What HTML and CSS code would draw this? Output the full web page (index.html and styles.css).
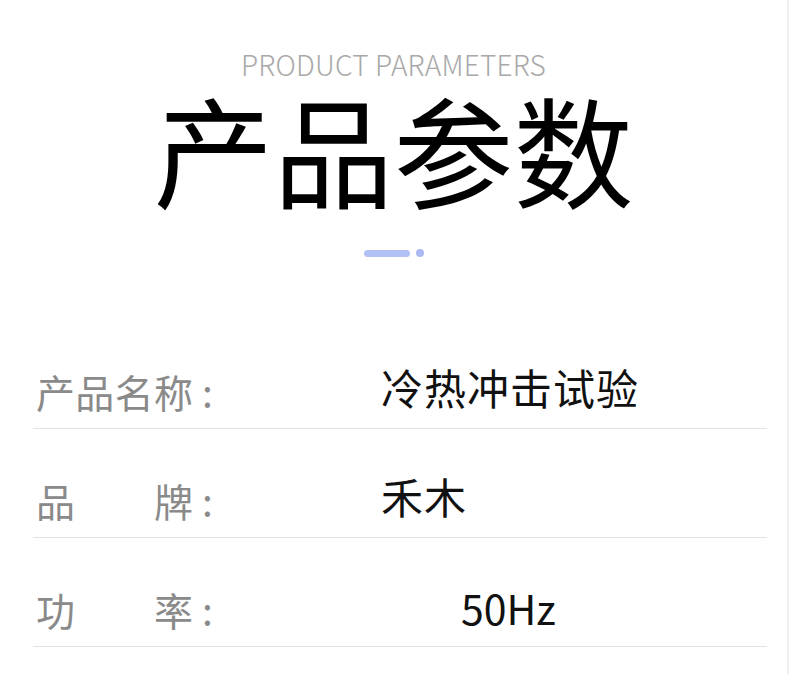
FILE: index.html
```html
<!DOCTYPE html>
<html lang="zh">
<head>
    <meta charset="UTF-8">
    <title>产品参数</title>
    <link rel="stylesheet" href="styles.css">
</head>
<body>
    <div class="page">
        <div class="heading">
            <div class="subtitle">PRODUCT PARAMETERS</div>
            <h1 class="title">产品参数</h1>
            <div class="deco">
                <span class="deco-bar"></span>
                <span class="deco-dot"></span>
            </div>
        </div>

        <div class="params">
            <div class="param-row">
                <div class="label"><span class="label-text"><span>产</span><span>品</span><span>名</span><span>称</span></span><span class="colon">:</span></div>
                <div class="value">冷热冲击试验</div>
            </div>
            <div class="param-row">
                <div class="label"><span class="label-text"><span>品</span><span>牌</span></span><span class="colon">:</span></div>
                <div class="value">禾木</div>
            </div>
            <div class="param-row">
                <div class="label"><span class="label-text"><span>功</span><span>率</span></span><span class="colon">:</span></div>
                <div class="value value-num">50Hz</div>
            </div>
        </div>
    </div>
</body>
</html>
```

FILE: styles.css
```css
body {
    margin: 0;
    background: #fff;
    font-family: "Noto Sans CJK SC", "Noto Sans", sans-serif;
}

.page {
    width: 787px;
    height: 674px;
    border-right: 2px solid #f0f0f0;
    overflow: hidden;
}

.heading {
    text-align: center;
    padding-top: 48px;
}

.subtitle {
    font-size: 28px;
    font-weight: 300;
    line-height: 32px;
    color: #a9a9a9;
    letter-spacing: 0.2px;
}

.title {
    margin: 6px 0 0;
    font-size: 120px;
    font-weight: 400;
    line-height: 124px;
    color: #000;
}

.deco {
    display: flex;
    justify-content: center;
    align-items: center;
    gap: 6px;
    margin-top: 39px;
}

.deco-bar {
    width: 46px;
    height: 7px;
    border-radius: 4px;
    background: #b2c1f4;
}

.deco-dot {
    width: 8px;
    height: 8px;
    border-radius: 50%;
    background: #aab9f2;
}

.params {
    margin: 63px 0 0 33px;
    width: 734px;
}

.param-row {
    display: flex;
    align-items: flex-end;
    height: 108px;
    border-bottom: 1px solid #e2e2e2;
}

.label {
    display: flex;
    align-items: center;
    width: 345px;
    padding-left: 3px;
    padding-bottom: 15px;
    font-size: 39px;
    line-height: 44px;
    color: #8a8a8a;
}

.label-text {
    display: flex;
    justify-content: space-between;
    width: 157px;
}

.colon {
    margin-left: 9px;
}

.value {
    padding-bottom: 19px;
    font-size: 42px;
    line-height: 44px;
    color: #111;
    letter-spacing: 1px;
}

.value-num {
    padding-left: 80px;
    padding-bottom: 17px;
    font-size: 41px;
    letter-spacing: 0;
}
```
